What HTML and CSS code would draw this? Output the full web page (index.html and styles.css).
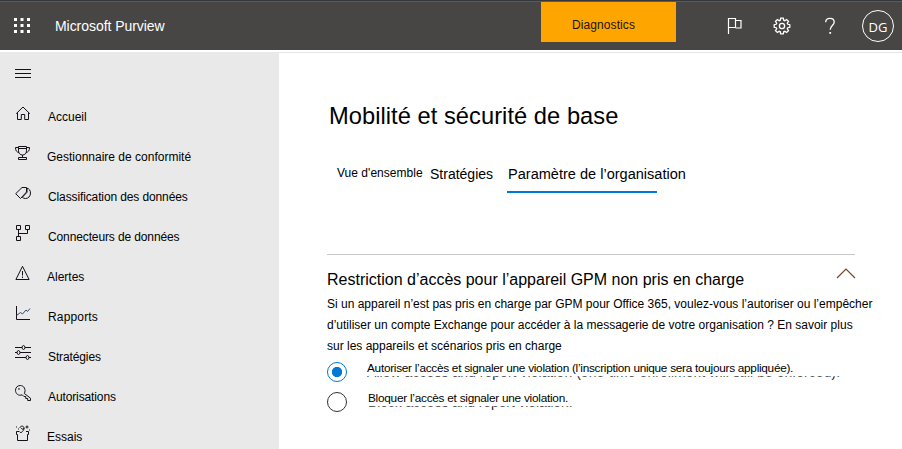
FILE: index.html
```html
<!DOCTYPE html>
<html lang="fr">
<head>
<meta charset="utf-8">
<title>Microsoft Purview</title>
<link rel="stylesheet" href="styles.css">
</head>
<body>
<header class="topbar">
  <svg class="waffle" width="16" height="15" viewBox="0 0 16 15" fill="#fff"><path d="M0 0h3v3H0zM6.5 0h3v3h-3zM13 0h3v3h-3zM0 6h3v3H0zM6.5 6h3v3h-3zM13 6h3v3h-3zM0 12h3v3H0zM6.5 12h3v3h-3zM13 12h3v3h-3z"/></svg>
  <span class="brand">Microsoft Purview</span>
  <button class="diagnostics">Diagnostics</button>
  <div class="actions">
    <svg width="16" height="18" viewBox="0 0 16 18"><path d="M1.500 17V1.500h7v9h-7M8.500 3.500h5.500v7.500h-5.500"/></svg>
    <svg class="gear" width="18" height="18" viewBox="0 0 18 18"><circle cx="9" cy="9" r="2.600"/><path d="M7.700 1.200h2.600l.4 2 1.100.500 1.800-1.200 1.900 1.900-1.200 1.800.5 1.100 2 .4v2.600l-2 .4-.5 1.100 1.200 1.800-1.900 1.900-1.800-1.200-1.100.5-.4 2H7.700l-.4-2-1.100-.5-1.800 1.200-1.900-1.900 1.200-1.800-.5-1.100-2-.4V7.700l2-.4.5-1.100-1.200-1.800 1.900-1.900 1.800 1.200 1.100-.5z"/></svg>
    <svg class="help" width="12" height="18" viewBox="0 0 12 18"><path d="M1.700 5.200C1.700 2.700 3.500 1.300 6 1.300s4.200 1.400 4.200 3.700c0 3.300-4 3.700-4 7.700"/><path d="M6.200 15v1.800" stroke-width="1.800"/></svg>
  </div>
  <span class="avatar">DG</span>
</header>
<div class="shell">
  <nav class="sidebar">
    <svg class="burger" width="16" height="10" viewBox="0 0 16 10"><path d="M0 .5h16M0 4.500h16M0 8.500h16"/></svg>
    <ul class="nav">
      <li><svg viewBox="0 0 16 16"><path d="M1.200 8.700 8 2l6.800 6.700M2.500 7.800v6.700h3.800v-5h3.400v5h3.800V7.800"/></svg><span>Accueil</span></li>
      <li class="shift"><svg viewBox="0 0 16 16"><path d="M3.500 1.500h8v4.300c0 2.600-1.600 4.200-4 4.200s-4-1.600-4-4.200zM3.500 3.500h8M3.500 2.500h-3c0 3 1 4.700 3.600 5M11.500 2.500h3c0 3-1 4.700-3.600 5M7.500 10v2.500M4.500 12.500h6M3.500 14.500h8v-2h-8z"/></svg><span>Gestionnaire de conformité</span></li>
      <li class="tight"><svg viewBox="0 0 16 16"><path d="M7 2.500h4.500v4.500L5.500 13.500.7 8.700zM9.500 4.500h.1M12 3.200c2 .4 3.500 2.200 3.500 4.800 0 3.300-2.200 5.500-5 5.500-1.300 0-2.300-.4-3.200-1.200l4.700-5z"/></svg><span>Classification des données</span></li>
      <li class="tight"><svg viewBox="0 0 16 16"><path d="M1.500.5h4v4h-4zM10.500.5h4v4h-4zM1.500 11.500h4v4h-4zM3.500 4.500v7M3.500 8.500h9v-4"/></svg><span>Connecteurs de données</span></li>
      <li class="shift"><svg viewBox="0 0 16 16"><path d="M7.500 1.300.9 14.500h13.200zM7.500 6v4.500M7.500 11.500V13"/></svg><span>Alertes</span></li>
      <li class="wide"><svg viewBox="0 0 16 16"><path d="M1.500 1v13.500H15"/><path class="trend" d="M1.500 10.500 5.500 7.500l2 1.500 3.500-4 1.500 1.500L15 3.500"/></svg><span>Rapports</span></li>
      <li class="tight"><svg viewBox="0 0 16 16"><path d="M0 2.500h7M10 2.500h6M0 7.500h2M5 7.500h11M0 12.500h11M14 12.500h2"/><ellipse cx="8.500" cy="2.500" rx="1.400" ry="2"/><ellipse cx="3.500" cy="7.500" rx="1.400" ry="2"/><ellipse cx="12.500" cy="12.500" rx="1.400" ry="2"/></svg><span>Stratégies</span></li>
      <li class="tight"><svg viewBox="0 0 16 16"><path d="M9.300 8.500 15.500 13.200v2.300h-2.800v-2h-2v-2H8.900L7.200 9.800C3.700 11.300.5 8.700.5 5.300.5 2.500 2.600.5 5.300.5c3.700 0 6 4.200 4 8z"/><circle cx="4" cy="4" r=".4"/></svg><span>Autorisations</span></li>
      <li class="shift"><svg viewBox="0 0 16 16"><path d="M4 6.500H1.500v3h1v6h10v-6h1v-3H11M4.500 6.500c.5 1.500 2.500 1.300 2.800 0M5 3c0-2.500 4-2.500 4 0 0 1.800-2.500 1.800-2.500 0M9 3c0 2-.8 2.500-1.500 3.500M12 .5v3M10.500 2h3M1.500 1.500v1M14.500 4.500v1M3 4h1"/></svg><span>Essais</span></li>
    </ul>
  </nav>
  <main class="content">
    <h1>Mobilité et sécurité de base</h1>
    <div class="tabs">
      <span class="tab overview">Vue d'ensemble</span>
      <span class="tab policies">Stratégies</span>
      <span class="tab active">Paramètre de l’organisation</span>
    </div>
    <section class="panel">
      <div class="panel-head">
        <h2>Restriction d’accès pour l’appareil GPM non pris en charge</h2>
        <svg width="20" height="12" viewBox="0 0 20 12"><path d="m1 10 9-9 9 9"/></svg>
      </div>
      <p>Si un appareil n’est pas pris en charge par GPM pour Office 365, voulez-vous l’autoriser ou l’empêcher<br>d’utiliser un compte Exchange pour accéder à la messagerie de votre organisation ? En savoir plus<br>sur les appareils et scénarios pris en charge</p>
      <div class="option selected">
        <span class="radio"></span>
        <span class="label">Autoriser l’accès et signaler une violation (l’inscription unique sera toujours appliquée).</span>
        <span class="under" aria-hidden="true">Allow access and report violation (one-time enrollment will still be enforced).</span>
      </div>
      <div class="option second">
        <span class="radio"></span>
        <span class="label">Bloquer l’accès et signaler une violation.</span>
        <span class="under" aria-hidden="true">Block access and report violation.</span>
      </div>
    </section>
  </main>
</div>
</body>
</html>
```
FILE: styles.css
```css
* { box-sizing: border-box; }
body {
  margin: 0;
  height: 449px;
  overflow: hidden;
  background: #fff;
  color: #000;
  font: 12px/20px "Liberation Sans", Arial, sans-serif;
}
svg { display: block; flex: none; fill: none; stroke: #140f18; stroke-width: 1; }
h1, h2, p, ul { margin: 0; padding: 0; font-weight: normal; }

.topbar {
  display: flex;
  height: 50px;
  background: #484644;
  border-top: 1px solid #36383f;
  box-shadow: inset 0 1px #595a60;
  color: #fff;
}
.waffle { margin: 17px 0 0 13.5px; stroke: none; fill: #fff; }
.brand { width: 486px; margin: 15px 0 0 25.5px; font-size: 14px; line-height: 21px; letter-spacing: -.05px; white-space: nowrap; }
.diagnostics {
  width: 135px;
  height: 40px;
  margin: 1px 0 0;
  padding: 5px 0 0 31px;
  border: 0;
  background: #ffa500;
  color: #201500;
  font: inherit;
  letter-spacing: .09px;
  text-align: left;
}
.actions { display: flex; width: 159px; margin-left: 51px; padding-top: 16px; }
.actions svg { stroke: #fff; stroke-width: 1.2; }
.actions .gear { margin: 0 33px 0 30px; stroke-width: 1.3; }
.actions .help { stroke-width: 1.3; }
.avatar {
  width: 32px;
  height: 32px;
  margin: 9px 0 0 -24px;
  border: 1px solid #fff;
  border-radius: 50%;
  font: 13px/33px "Open Sans", sans-serif;
  text-align: center;
}

.shell { display: flex; height: 397px; margin-top: 2px; }
.sidebar { width: 279px; background: #e9e9e9; }
.burger { margin: 17px 0 0 15px; }
.nav { margin-top: 18px; list-style: none; }
.nav li { display: flex; height: 40px; padding-left: 15px; line-height: 40px; }
.nav svg { width: 16px; height: 16px; margin: 8px 17px 0 0; }
.nav .shift svg { margin-right: 16px; }
.trend { stroke: #2c4a6c; }
.tight { letter-spacing: -.12px; }
.wide { letter-spacing: .16px; }

.content { flex: 1; padding: 50px 0 0 48px; border-top: 1px solid #e6e6e6; }
h1 { padding-left: 2px; font-size: 23.66px; line-height: 26px; letter-spacing: .05px; }
.tabs { display: flex; height: 32px; margin-top: 33px; padding-left: 10px; white-space: nowrap; }
.tab { line-height: 22px; }
.overview { width: 93px; letter-spacing: .03px; }
.policies { width: 77px; font-size: 14px; line-height: 24px; }
.tab.active {
  width: 150px;
  height: 31px;
  border-bottom: 2px solid #0078d4;
  font-size: 14.55px;
  line-height: 25px;
  text-indent: 1px;
}
.panel { margin-top: 60px; border-top: 1px solid #c8c8c8; width: 528px; }
.panel-head { display: flex; justify-content: space-between; margin-right: -1px; padding-top: 13px; }
.panel-head svg { stroke: #7a4322; stroke-width: 1.2; }
h2 { font-size: 16px; line-height: 24px; }
p { margin-top: 2px; line-height: 21px; white-space: nowrap; }
.option { position: relative; display: flex; height: 30px; padding-top: 5px; white-space: nowrap; }
.radio {
  flex: none;
  width: 20px;
  height: 20px;
  border: 1px solid #333;
  border-radius: 50%;
}
.selected .radio {
  border-color: #0078d4;
  background: radial-gradient(circle, #0078d4 4.8px, transparent 5.4px);
}
.label { margin: -4px 0 0 20px; font-size: 11.8px; letter-spacing: -.275px; }
.second .label { margin-left: 21px; letter-spacing: -.25px; }
.under {
  position: absolute;
  top: 5px;
  left: 40px;
  clip-path: inset(14.2px 0 0);
  color: #222;
  font-size: 14px;
  letter-spacing: .04px;
}
.second .under { left: 41px; letter-spacing: -.12px; }
```
